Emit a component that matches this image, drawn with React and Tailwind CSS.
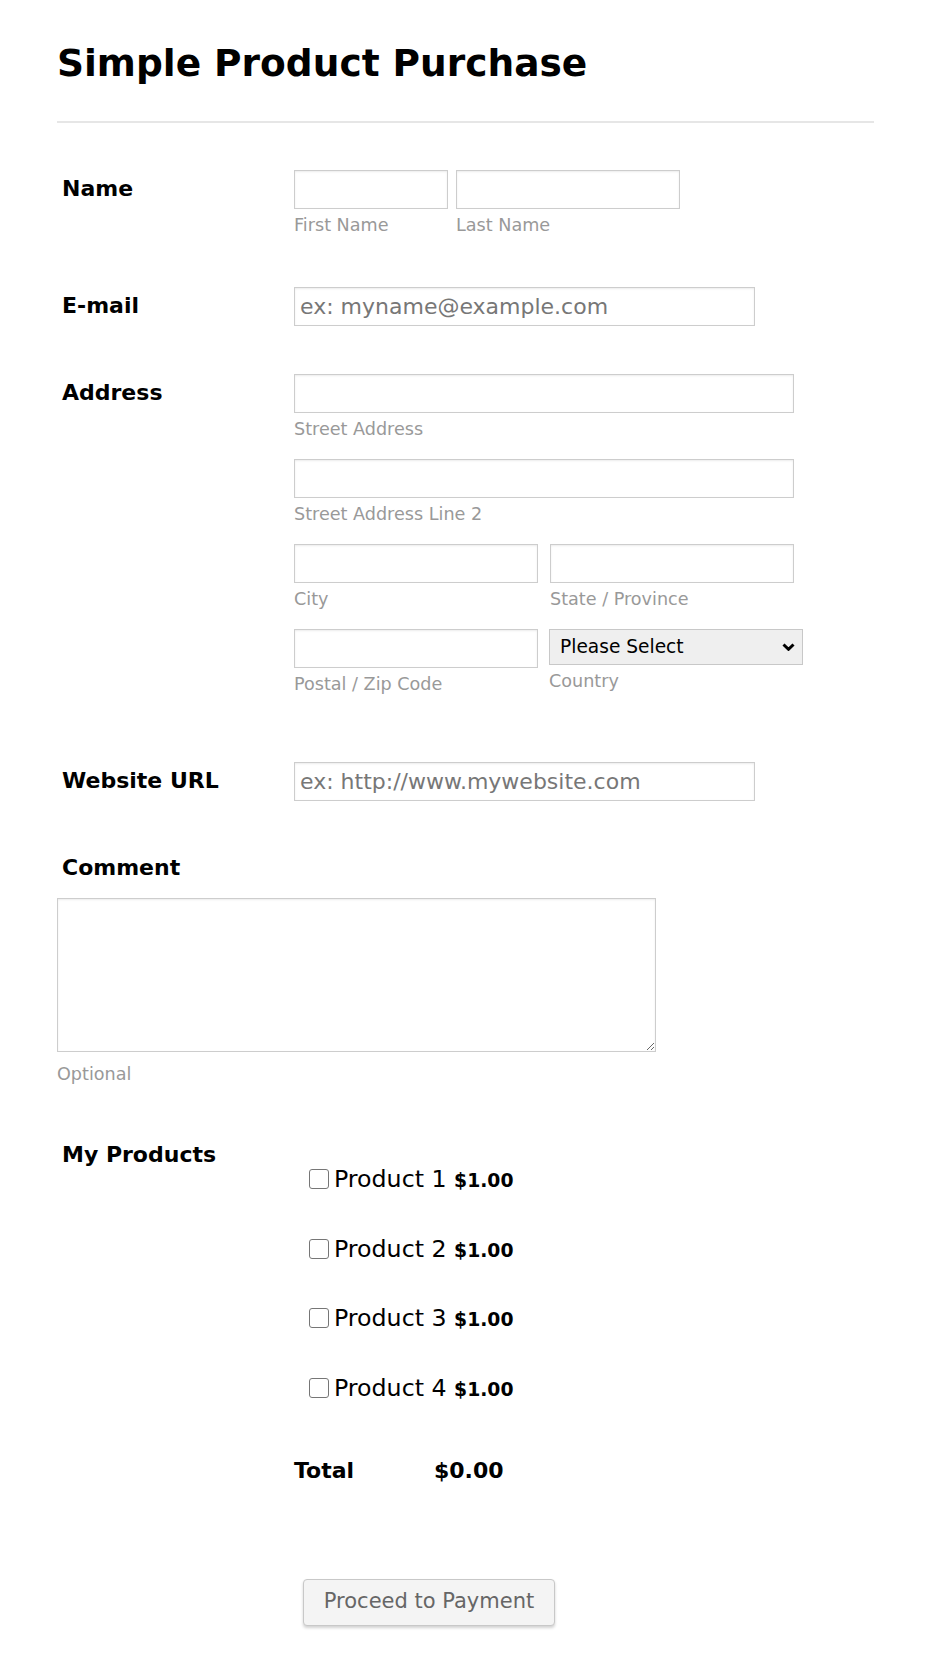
import React from "react";

const inputCls =
  "block w-full h-[39px] border border-[#cdcdcd] bg-white shadow-[inset_0_1px_2px_rgba(0,0,0,0.08)] px-[5px] text-[22px] text-[#333] placeholder:text-[#777] outline-none font-['DejaVu_Sans',sans-serif]";
const subCls = "mt-[6px] text-[17.6px] leading-[20px] text-[#999]";
const labelCls =
  "w-[237px] shrink-0 pl-[5px] pt-[6px] text-[22px] leading-[26px] font-bold text-black";

function Field({ w, sub, placeholder }) {
  return (
    <div className={w}>
      <input type="text" placeholder={placeholder} className={inputCls} />
      {sub && <div className={subCls}>{sub}</div>}
    </div>
  );
}

function Product({ n }) {
  return (
    <label className="flex items-center h-[26px]">
      <input
        type="checkbox"
        className="appearance-none block w-[20px] h-[20px] border border-[#767676] rounded-[3px] bg-white m-0"
      />
      <span className="ml-[5px] text-[23.7px] leading-[26px] text-black whitespace-nowrap">
        Product {n}{" "}
        <span className="font-bold text-[18.8px] leading-none">$1.00</span>
      </span>
    </label>
  );
}

export default function App() {
  return (
    <div className="min-h-[1665px] bg-white font-['DejaVu_Sans',sans-serif] text-black">
      <div className="pl-[57px] pt-[41px] pb-[39px]">
        <h1 className="text-[37.5px] leading-[44px] font-bold">Simple Product Purchase</h1>
        <div className="mt-[36px] h-[2px] w-[817px] bg-[#e6e6e6]" />

        {/* Name */}
        <div className="mt-[47px] flex">
          <div className={labelCls}>Name</div>
          <div className="flex gap-[8px]">
            <Field w="w-[154px]" sub="First Name" />
            <Field w="w-[224px]" sub="Last Name" />
          </div>
        </div>

        {/* Email */}
        <div className="mt-[52px] flex">
          <div className={labelCls}>E-mail</div>
          <Field w="w-[461px]" placeholder="ex: myname@example.com" />
        </div>

        {/* Address */}
        <div className="mt-[48px] flex">
          <div className={labelCls}>Address</div>
          <div className="flex flex-col">
            <Field w="w-[500px]" sub="Street Address" />
            <div className="mt-[20px]">
              <Field w="w-[500px]" sub="Street Address Line 2" />
            </div>
            <div className="mt-[20px] flex gap-[12px]">
              <Field w="w-[244px]" sub="City" />
              <Field w="w-[244px]" sub="State / Province" />
            </div>
            <div className="mt-[20px] flex gap-[11px] items-start">
              <Field w="w-[244px]" sub="Postal / Zip Code" />
              <div className="w-[254px]">
                <div className="relative">
                  <select className="appearance-none block w-full h-[36px] border border-[#c8c8c8] bg-[#efefef] pl-[10px] text-[18.6px] text-black outline-none font-['DejaVu_Sans',sans-serif]">
                    <option>Please Select</option>
                  </select>
                  <svg
                    className="absolute right-[8px] top-[14px] pointer-events-none"
                    width="13"
                    height="8"
                    viewBox="0 0 13 8"
                  >
                    <path d="M1.5 1.5 L6.5 6.3 L11.5 1.5" fill="none" stroke="#000" strokeWidth="3" />
                  </svg>
                </div>
                <div className={subCls}>Country</div>
              </div>
            </div>
          </div>
        </div>

        {/* Website */}
        <div className="mt-[68px] flex">
          <div className={labelCls}>Website URL</div>
          <Field w="w-[461px]" placeholder="ex: http://www.mywebsite.com" />
        </div>

        {/* Comment */}
        <div className="mt-[54px] pl-[5px] text-[22px] leading-[26px] font-bold">Comment</div>
        <textarea className="mt-[17px] block w-[599px] h-[154px] border border-[#cdcdcd] bg-white shadow-[inset_0_1px_2px_rgba(0,0,0,0.08)] outline-none" />
        <div className="mt-[12px] text-[17.6px] leading-[20px] text-[#999]">Optional</div>

        {/* Products */}
        <div className="mt-[57px] flex">
          <div className="w-[237px] shrink-0 pl-[5px] pt-[1px] text-[22px] leading-[26px] font-bold">My Products</div>
          <div className="pt-[25px] pl-[15px] flex flex-col gap-[43.5px]">
            <Product n={1} />
            <Product n={2} />
            <Product n={3} />
            <Product n={4} />
          </div>
        </div>

        {/* Total */}
        <div className="mt-[57px] ml-[237px] flex text-[22px] leading-[26px] font-bold">
          <div className="w-[140px]">Total</div>
          <div>$0.00</div>
        </div>

        <button
          type="button"
          className="mt-[95px] ml-[246px] block h-[47px] w-[252px] rounded-[4px] border border-[#c8c8c8] bg-[#f4f4f4] text-[21px] text-[#666] shadow-[0_2px_3px_rgba(0,0,0,0.18)] font-['DejaVu_Sans',sans-serif]"
        >
          Proceed to Payment
        </button>
      </div>
    </div>
  );
}
